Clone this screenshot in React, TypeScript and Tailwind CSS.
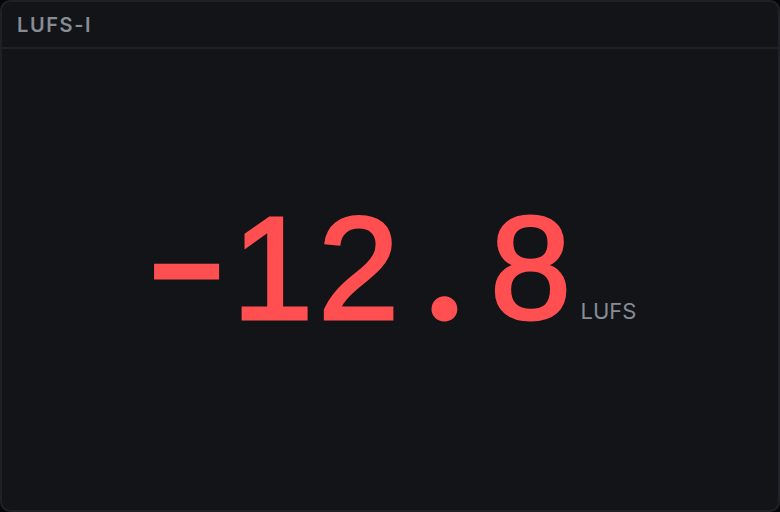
import React from 'react';

interface LoudnessPanelProps {
  title: string;
  value: number;
  unit: string;
}

function LoudnessPanel({ title, value, unit }: LoudnessPanelProps) {
  const sign = value < 0 ? '−' : '';
  const chars = (sign + Math.abs(value).toFixed(1)).split('');

  return (
    <section className="flex min-h-screen flex-col overflow-hidden rounded-[10px] border-2 border-[#1f2127] bg-[#121417] font-['Inter',sans-serif]">
      <header className="border-b-2 border-[#1f2127] px-[15px] pt-[9px] pb-2">
        <h2 className="text-[20px] leading-7 font-semibold tracking-[0.08em] text-[#868c96]">{title}</h2>
      </header>
      <div className="flex flex-1 items-center justify-center pb-[22px]">
        <p className="flex items-baseline gap-[7px]">
          {/* every character gets a cell of the same width */}
          <span className="flex items-baseline font-['Liberation_Sans',sans-serif] text-[146px] leading-none text-[#ff4f50] [-webkit-text-stroke:3px_#ff4f50]">
            {chars.map((char, i) => (
              <span
                key={i}
                className={
                  char === '−'
                    ? "w-[86px] text-center font-['Lato',sans-serif] text-[140px] font-bold"
                    : char === '.'
                      ? "w-[86px] text-center font-['Lato',sans-serif] text-[140px] font-black"
                      : 'w-[86px] text-center'
                }
              >
                {char}
              </span>
            ))}
          </span>
          <span className="text-[22px] leading-none text-[#868c96]">{unit}</span>
        </p>
      </div>
    </section>
  );
}

export default function App() {
  return (
    <main className="min-h-screen bg-[#050609]">
      <LoudnessPanel title="LUFS-I" value={-12.8} unit="LUFS" />
    </main>
  );
}
